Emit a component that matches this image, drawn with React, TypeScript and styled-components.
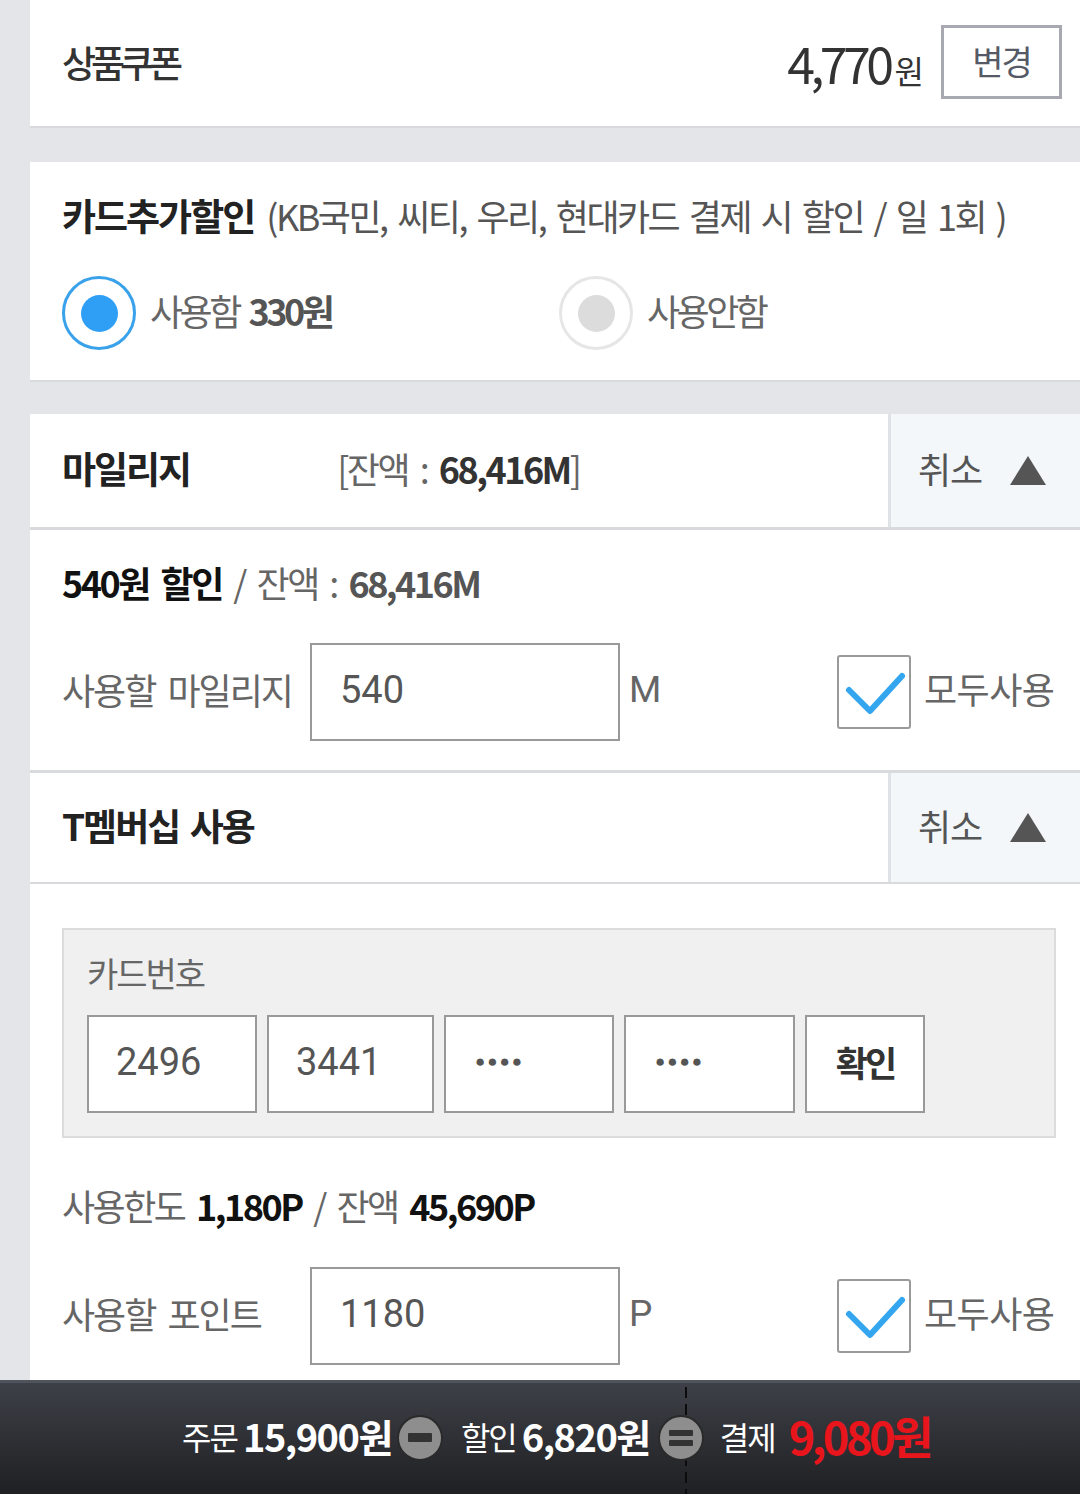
import React from "react";
import styled, { createGlobalStyle } from "styled-components";

const GlobalStyle = createGlobalStyle`
  html, body { margin: 0; padding: 0; }
  body {
    background: #e4e5e9;
    font-family: "Noto Sans CJK KR", "Noto Sans", sans-serif;
  }
  * { box-sizing: border-box; }
`;

const KR = `"Noto Sans CJK KR", "Noto Sans", sans-serif`;
const NUM = `Roboto, "Noto Sans", sans-serif`;

const Page = styled.div`
  width: 1080px;
  height: 1494px;
  display: flex;
  flex-direction: column;
  overflow: hidden;
`;

const Content = styled.div`
  flex: 1;
  min-height: 0;
  overflow: hidden;
  padding-left: 30px;
  display: flex;
  flex-direction: column;
`;

const Panel = styled.section<{ $gap?: number; $h?: number; $border?: number; $grow?: boolean }>`
  background: #fff;
  margin-top: ${(p) => p.$gap ?? 0}px;
  border-bottom: ${(p) => p.$border ?? 2}px solid #d9dadd;
  ${(p) => (p.$h ? `height: ${p.$h}px;` : "")}
  ${(p) => (p.$grow ? "flex: 1;" : "flex-shrink: 0;")}
`;

const CouponRow = styled.div`
  height: 100%;
  display: flex;
  align-items: center;
  padding: 0 18px 2px 32px;
`;

const Title = styled.div`
  font-family: ${KR};
  font-size: 37px;
  font-weight: 700;
  letter-spacing: -2px;
  word-spacing: 4px;
  color: #222;
  white-space: pre;
`;

const CouponTitle = styled(Title)`
  font-weight: 500;
  letter-spacing: -5px;
  color: #333;
  flex: 1;
`;

const Amount = styled.div`
  font-family: ${KR};
  color: #333;
  display: flex;
  align-items: baseline;
  margin-right: 20px;
`;

const AmountNum = styled.span`
  font-size: 50px;
  font-weight: 400;
  letter-spacing: -4.5px;
`;

const AmountUnit = styled.span`
  font-size: 32px;
  letter-spacing: -3px;
  margin-left: 5px;
`;

const ChangeButton = styled.button`
  width: 121px;
  height: 74px;
  border: 3px solid #a8a9b0;
  background: #fff;
  font-family: ${KR};
  font-size: 34px;
  letter-spacing: -2px;
  color: #555a66;
  padding: 0 0 4px;
`;

const CardBlock = styled.div`
  height: 100%;
  display: flex;
  flex-direction: column;
  padding: 26px 0 0 32px;
`;

const CardTitleLine = styled.div`
  display: flex;
  align-items: baseline;
  gap: 12px;
`;

const Note = styled.span`
  font-family: ${KR};
  font-size: 36px;
  letter-spacing: -2.5px;
  word-spacing: 5px;
  color: #555;
  white-space: pre;
`;

const RadioRow = styled.div`
  display: flex;
  align-items: center;
  margin-top: 34px;
`;

const RadioItem = styled.label<{ $w: number }>`
  width: ${(p) => p.$w}px;
  display: flex;
  align-items: center;
  gap: 14px;
`;

const RadioCircle = styled.span<{ $on?: boolean }>`
  width: 74px;
  height: 74px;
  border-radius: 50%;
  border: 3px solid ${(p) => (p.$on ? "#3aa2ea" : "#e6e6e6")};
  background: #fff;
  display: flex;
  align-items: center;
  justify-content: center;
  &::after {
    content: "";
    width: 37px;
    height: 37px;
    border-radius: 50%;
    background: ${(p) => (p.$on ? "#2f9ff5" : "#dcdcdc")};
  }
`;

const RadioLabel = styled.span`
  font-family: ${KR};
  font-size: 36px;
  letter-spacing: -3.5px;
  word-spacing: 5px;
  color: #666;
  padding-bottom: 6px;
  white-space: pre;
`;

const Strong = styled.b<{ $c?: string }>`
  font-weight: 700;
  color: ${(p) => p.$c ?? "#555"};
`;

const Header = styled.div`
  height: 100%;
  display: flex;
  align-items: stretch;
`;

const HeaderMain = styled.div`
  flex: 1;
  display: flex;
  align-items: center;
  padding: 0 0 6px 32px;
`;

const Balance = styled.span`
  font-family: ${KR};
  font-size: 36px;
  letter-spacing: -2.5px;
  word-spacing: 6px;
  color: #666;
  margin-left: 147px;
  white-space: pre;
`;

const CancelBox = styled.div`
  width: 192px;
  background: #f3f7fa;
  border-left: 3px solid #dfe3e7;
  display: flex;
  align-items: center;
  padding: 0 0 6px 27px;
  gap: 28px;
`;

const CancelText = styled.span`
  font-family: ${KR};
  font-size: 36px;
  letter-spacing: -1px;
  color: #555;
`;

const Triangle = styled.span`
  width: 0;
  height: 0;
  border-left: 18px solid transparent;
  border-right: 18px solid transparent;
  border-bottom: 29px solid #555;
  margin-top: 6px;
`;

const Body = styled.div<{ $pt: number }>`
  padding: ${(p) => p.$pt}px 24px 0 32px;
  display: flex;
  flex-direction: column;
`;

const InfoLine = styled.div<{ $mt?: number }>`
  font-family: ${KR};
  font-size: 36px;
  letter-spacing: -2.5px;
  word-spacing: 6px;
  color: #666;
  height: 50px;
  margin-top: ${(p) => p.$mt ?? 0}px;
  display: flex;
  align-items: center;
  white-space: pre;
`;

const InputRow = styled.div<{ $mt: number }>`
  display: flex;
  align-items: center;
  margin-top: ${(p) => p.$mt}px;
  height: 98px;
`;

const RowLabel = styled.span`
  width: 248px;
  font-family: ${KR};
  font-size: 36px;
  letter-spacing: -2px;
  word-spacing: 6px;
  color: #666;
  padding-bottom: 6px;
  white-space: pre;
`;

const Field = styled.div<{ $w: number }>`
  width: ${(p) => p.$w}px;
  height: 98px;
  border: 2px solid #999;
  background: #fff;
  display: flex;
  align-items: center;
  padding: 0 0 5px 28px;
  font-family: ${NUM};
  font-size: 38px;
  color: #555;
  flex-shrink: 0;
`;

const Unit = styled.span`
  font-family: ${NUM};
  font-size: 37px;
  color: #666;
  margin-left: 9px;
  width: 208px;
  padding-bottom: 6px;
`;

const CheckWrap = styled.label`
  display: flex;
  align-items: center;
  gap: 13px;
`;

const CheckBox = styled.span`
  width: 74px;
  height: 74px;
  border: 2px solid #9a9a9a;
  border-radius: 3px;
  background: #fff;
  display: flex;
  svg { display: block; }
`;

const CheckLabel = styled.span`
  font-family: ${KR};
  font-size: 36px;
  letter-spacing: -0.5px;
  color: #666;
  padding-bottom: 8px;
`;

const CardPanel = styled.div`
  background: #f0f0f0;
  border: 2px solid #dcdcdc;
  height: 210px;
  padding: 18px 0 0 23px;
  display: flex;
  flex-direction: column;
`;

const CardLabel = styled.span`
  font-family: ${KR};
  font-size: 34px;
  letter-spacing: -2px;
  color: #666;
  height: 50px;
`;

const CardInputs = styled.div`
  display: flex;
  gap: 10px;
  margin-top: 17px;
`;

const CardField = styled(Field)`
  padding-left: 27px;
`;

const Dots = styled.span`
  font-size: 17px;
  letter-spacing: 2px;
  color: #555;
  padding: 0 0 1px 2px;
`;

const ConfirmButton = styled.button`
  width: 120px;
  height: 98px;
  border: 2px solid #999;
  background: #fff;
  font-family: ${KR};
  font-size: 35px;
  font-weight: 700;
  letter-spacing: -3px;
  color: #333;
  padding: 0 0 6px;
`;

const Footer = styled.footer`
  height: 114px;
  flex-shrink: 0;
  position: relative;
  background: linear-gradient(#3d4047, #1f2023);
  border-top: 3px solid #4f545c;
  display: flex;
  align-items: center;
  justify-content: center;
  padding: 0 0 6px 32px;
  &::before {
    content: "";
    position: absolute;
    left: 685px;
    top: 4px;
    bottom: 0;
    width: 2px;
    background: repeating-linear-gradient(#0c0c0c 0 11px, transparent 11px 17px);
  }
`;

const Sum = styled.div`
  display: flex;
  align-items: center;
  position: relative;
  font-family: ${KR};
  color: #fff;
`;

const SumLabel = styled.span`
  font-size: 32px;
  letter-spacing: -2px;
  margin-right: 6px;
`;

const SumValue = styled.span<{ $red?: boolean }>`
  font-size: ${(p) => (p.$red ? 45 : 38)}px;
  font-weight: 700;
  letter-spacing: ${(p) => (p.$red ? -3.5 : -1.5)}px;
  color: ${(p) => (p.$red ? "#e8161c" : "#fff")};
  margin-left: ${(p) => (p.$red ? 8 : 0)}px;
`;

const Op = styled.span<{ $eq?: boolean }>`
  width: 46px;
  height: 46px;
  border-radius: 50%;
  background: #8e8e8e;
  border: 2px solid #2a2a2a;
  display: inline-flex;
  flex-direction: column;
  align-items: center;
  justify-content: center;
  gap: 4px;
  margin: 4px ${(p) => (p.$eq ? 16 : 18)}px 0 ${(p) => (p.$eq ? 8 : 5)}px;
  flex-shrink: 0;
  &::before {
    content: "";
    width: 24px;
    height: ${(p) => (p.$eq ? 6 : 9)}px;
    background: #333;
    border-radius: 1px;
  }
  ${(p) =>
    p.$eq
      ? `&::after { content: ""; width: 24px; height: 6px; background: #333; border-radius: 1px; }`
      : ""}
`;

function Check() {
  return (
    <CheckBox>
      <svg width="70" height="70" viewBox="0 0 70 70">
        <path d="M10 33 L31 54 L63 19" fill="none" stroke="#33a6ef" strokeWidth="6" strokeLinecap="round" strokeLinejoin="round" />
      </svg>
    </CheckBox>
  );
}

function Cancel() {
  return (
    <CancelBox>
      <CancelText>취소</CancelText>
      <Triangle />
    </CancelBox>
  );
}

export default function App() {
  return (
    <>
      <GlobalStyle />
      <Page>
        <Content>
          <Panel $h={128}>
            <CouponRow>
              <CouponTitle>상품쿠폰</CouponTitle>
              <Amount>
                <AmountNum>4,770</AmountNum>
                <AmountUnit>원</AmountUnit>
              </Amount>
              <ChangeButton>변경</ChangeButton>
            </CouponRow>
          </Panel>

          <Panel $gap={34} $h={220}>
            <CardBlock>
              <CardTitleLine>
                <Title>카드추가할인</Title>
                <Note>(KB국민, 씨티, 우리, 현대카드 결제 시 할인 / 일 1회 )</Note>
              </CardTitleLine>
              <RadioRow>
                <RadioItem $w={497}>
                  <RadioCircle $on />
                  <RadioLabel>
                    사용함 <Strong>330원</Strong>
                  </RadioLabel>
                </RadioItem>
                <RadioItem $w={300}>
                  <RadioCircle />
                  <RadioLabel>사용안함</RadioLabel>
                </RadioItem>
              </RadioRow>
            </CardBlock>
          </Panel>

          <Panel $gap={32} $h={116} $border={3}>
            <Header>
              <HeaderMain>
                <Title>마일리지</Title>
                <Balance>
                  [잔액 : <Strong $c="#333">68,416M</Strong>]
                </Balance>
              </HeaderMain>
              <Cancel />
            </Header>
          </Panel>

          <Panel $h={243} $border={3}>
            <Body $pt={27}>
              <InfoLine>
                <Strong $c="#111">540원 할인</Strong> / 잔액 : <Strong $c="#555">68,416M</Strong>
              </InfoLine>
              <InputRow $mt={36}>
                <RowLabel>사용할 마일리지</RowLabel>
                <Field $w={310}>540</Field>
                <Unit>M</Unit>
                <CheckWrap>
                  <Check />
                  <CheckLabel>모두사용</CheckLabel>
                </CheckWrap>
              </InputRow>
            </Body>
          </Panel>

          <Panel $h={111}>
            <Header>
              <HeaderMain>
                <Title>T멤버십 사용</Title>
              </HeaderMain>
              <Cancel />
            </Header>
          </Panel>

          <Panel $border={0} $grow>
            <Body $pt={44}>
              <CardPanel>
                <CardLabel>카드번호</CardLabel>
                <CardInputs>
                  <CardField $w={170}>2496</CardField>
                  <CardField $w={167}>3441</CardField>
                  <CardField $w={170}>
                    <Dots>●●●●</Dots>
                  </CardField>
                  <CardField $w={171}>
                    <Dots>●●●●</Dots>
                  </CardField>
                  <ConfirmButton>확인</ConfirmButton>
                </CardInputs>
              </CardPanel>
              <InfoLine $mt={42}>
                사용한도 <Strong $c="#111">1,180P</Strong> / 잔액 <Strong $c="#111">45,690P</Strong>
              </InfoLine>
              <InputRow $mt={37}>
                <RowLabel>사용할 포인트</RowLabel>
                <Field $w={310}>1180</Field>
                <Unit>P</Unit>
                <CheckWrap>
                  <Check />
                  <CheckLabel>모두사용</CheckLabel>
                </CheckWrap>
              </InputRow>
            </Body>
          </Panel>
        </Content>
        <Footer>
          <Sum>
            <SumLabel>주문</SumLabel>
            <SumValue>15,900원</SumValue>
            <Op />
            <SumLabel>할인</SumLabel>
            <SumValue>6,820원</SumValue>
            <Op $eq />
            <SumLabel>결제</SumLabel>
            <SumValue $red>9,080원</SumValue>
          </Sum>
        </Footer>
      </Page>
    </>
  );
}
